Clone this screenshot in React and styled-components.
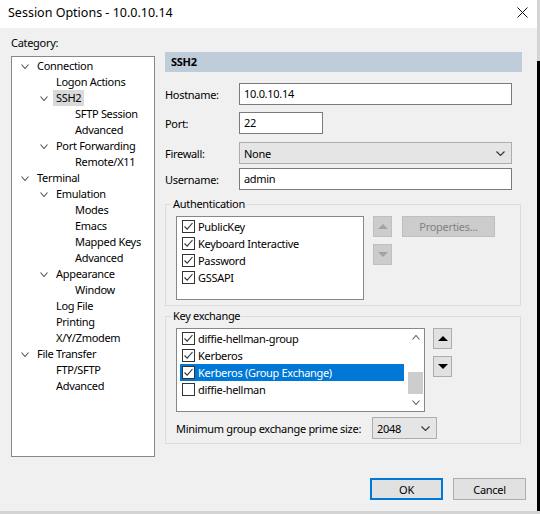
import React from "react";
import styled, { createGlobalStyle } from "styled-components";

const GlobalStyle = createGlobalStyle`
  html, body {
    margin: 0;
    padding: 0;
  }
  body {
    background: linear-gradient(#d4d4d4 0, #d4d4d4 61px, #000 61px);
    font-family: "Noto Sans", "Segoe UI", sans-serif;
    font-size: 11px;
    letter-spacing: -0.3px;
    color: #000;
  }
`;

const Window = styled.div`
  width: 537px;
  height: 511px;
  background: #f0f0f0;
  display: flex;
  flex-direction: column;
  overflow: hidden;
`;

const TitleBar = styled.div`
  height: 28px;
  flex: none;
  background: #fff;
  display: flex;
  justify-content: space-between;
  align-items: flex-start;
`;

const TitleText = styled.div`
  font-size: 12.5px;
  letter-spacing: 0;
  line-height: 16px;
  padding: 5px 0 0 8px;
`;

const CloseBox = styled.div`
  width: 30px;
  height: 24px;
  display: flex;
  align-items: center;
  justify-content: center;
`;

const Body = styled.div`
  padding: 7px 11px 0 11px;
`;

const Main = styled.div`
  display: flex;
  gap: 10px;
`;

const LeftCol = styled.div`
  width: 144px;
  flex: none;
`;

const CategoryLabel = styled.div`
  line-height: 16px;
  margin-bottom: 5px;
`;

const TreeBox = styled.div`
  height: 401px;
  box-sizing: border-box;
  border: 1px solid #828790;
  background: #fff;
  padding-top: 1px;
`;

const TreeRow = styled.div`
  height: 16px;
  display: flex;
  align-items: center;
  padding-left: ${(p) => 4 + p.$level * 19}px;
`;

const ChevronSlot = styled.div`
  width: 18px;
  flex: none;
  display: flex;
  align-items: center;
  justify-content: center;
`;

const TreeLabel = styled.span`
  padding: 0 3px;
  line-height: 16px;
  white-space: nowrap;
  background: ${(p) => (p.$selected ? "#d9d9d9" : "transparent")};
`;

const RightCol = styled.div`
  flex: 1;
  padding-top: 17px;
  margin-right: 4px;
`;

const PageHeader = styled.div`
  height: 20px;
  line-height: 20px;
  background: #bfcddb;
  font-weight: bold;
  padding-left: 6px;
`;

const FieldRow = styled.div`
  display: flex;
  align-items: center;
  margin-top: ${(p) => p.$top}px;
`;

const FieldLabel = styled.div`
  width: 74px;
  flex: none;
`;

const TextBox = styled.div`
  width: ${(p) => p.$width}px;
  height: 22px;
  box-sizing: border-box;
  border: 1px solid #7a7a7a;
  background: #fff;
  padding: 0 4px;
  line-height: 19px;
`;

const Select = styled.div`
  width: ${(p) => p.$width}px;
  height: 22px;
  box-sizing: border-box;
  border: 1px solid #adadad;
  background: #e5e5e5;
  padding: 0 6px 0 4px;
  display: flex;
  align-items: center;
  justify-content: space-between;
`;

const Group = styled.fieldset`
  margin: ${(p) => p.$top}px 1px 0 0;
  padding: 0;
  border: 1px solid #dcdcdc;
  min-width: 0;
`;

const Legend = styled.legend`
  margin-left: 5px;
  padding: 0 2px;
  line-height: 16px;
`;

const GroupBody = styled.div`
  padding: 4px 10px ${(p) => p.$bottom}px 10px;
`;

const ListRow = styled.div`
  display: flex;
  align-items: flex-start;
`;

const ListBox = styled.div`
  width: ${(p) => p.$width}px;
  height: 84px;
  box-sizing: border-box;
  border: 1px solid #828790;
  background: #fff;
  display: flex;
  flex: none;
`;

const Items = styled.div`
  flex: 1;
  padding: 1px 3px 0;
`;

const Item = styled.div`
  height: 17px;
  display: flex;
  align-items: center;
  padding-left: 2px;
  background: ${(p) => (p.$selected ? "#0078d7" : "transparent")};
  color: ${(p) => (p.$selected ? "#fff" : "#000")};
  white-space: nowrap;
`;

const Check = styled.div`
  width: 13px;
  height: 13px;
  box-sizing: border-box;
  border: 1px solid #333;
  background: #fff;
  margin-right: 3px;
  flex: none;
  display: flex;
  align-items: center;
  justify-content: center;
`;

const ScrollBar = styled.div`
  width: 17px;
  display: flex;
  flex-direction: column;
  background: #fff;
`;

const ScrollArrow = styled.div`
  height: 17px;
  display: flex;
  align-items: center;
  justify-content: center;
`;

const ScrollTrack = styled.div`
  flex: 1;
  display: flex;
  flex-direction: column;
  justify-content: flex-end;
`;

const Thumb = styled.div`
  height: 22px;
  margin: 0 1px;
  background: #cdcdcd;
`;

const MoveButtons = styled.div`
  display: flex;
  flex-direction: column;
  gap: 7px;
  margin-left: ${(p) => p.$gap}px;
`;

const ArrowButton = styled.div`
  width: 19px;
  height: 21px;
  box-sizing: border-box;
  border: 1px solid ${(p) => (p.$disabled ? "#bfbfbf" : "#adadad")};
  background: ${(p) => (p.$disabled ? "#cccccc" : "#e1e1e1")};
  display: flex;
  align-items: center;
  justify-content: center;
`;

const PushButton = styled.div`
  width: ${(p) => p.$width}px;
  height: ${(p) => p.$height}px;
  box-sizing: border-box;
  border: ${(p) => (p.$default ? "2px solid #0078d7" : p.$disabled ? "1px solid #bfbfbf" : "1px solid #adadad")};
  background: ${(p) => (p.$disabled ? "#cccccc" : "#e1e1e1")};
  color: ${(p) => (p.$disabled ? "#838383" : "#000")};
  display: flex;
  align-items: center;
  justify-content: center;
  margin-left: ${(p) => p.$gap || 0}px;
  flex: none;
`;

const PrimeRow = styled.div`
  display: flex;
  align-items: center;
  margin-top: 5px;
`;

const PrimeLabel = styled.div`
  width: 196px;
  flex: none;
`;

const Footer = styled.div`
  display: flex;
  justify-content: flex-end;
  gap: 10px;
  margin-top: 21px;
`;

const Chevron = ({ w = 8, h = 5, color = "#555" }) => (
  <svg width={w} height={h} viewBox={`0 0 ${w} ${h}`}>
    <path d={`M0.5 0.5 L${w / 2} ${h - 0.5} L${w - 0.5} 0.5`} fill="none" stroke={color} strokeWidth="1.1" />
  </svg>
);

const ChevronUp = ({ w = 8, h = 5, color = "#606060" }) => (
  <svg width={w} height={h} viewBox={`0 0 ${w} ${h}`}>
    <path d={`M0.5 ${h - 0.5} L${w / 2} 0.5 L${w - 0.5} ${h - 0.5}`} fill="none" stroke={color} strokeWidth="1.1" />
  </svg>
);

const Triangle = ({ up, color }) => (
  <svg width="10" height="5" viewBox="0 0 10 5">
    <polygon points={up ? "0,5 5,0 10,5" : "0,0 10,0 5,5"} fill={color} />
  </svg>
);

const CheckMark = () => (
  <svg width="11" height="11" viewBox="0 0 11 11">
    <path d="M1.5 5.5 L4.2 8.2 L9.5 2" fill="none" stroke="#333" strokeWidth="1.1" />
  </svg>
);

const tree = [
  [0, "Connection", true],
  [1, "Logon Actions"],
  [1, "SSH2", true, true],
  [2, "SFTP Session"],
  [2, "Advanced"],
  [1, "Port Forwarding", true],
  [2, "Remote/X11"],
  [0, "Terminal", true],
  [1, "Emulation", true],
  [2, "Modes"],
  [2, "Emacs"],
  [2, "Mapped Keys"],
  [2, "Advanced"],
  [1, "Appearance", true],
  [2, "Window"],
  [1, "Log File"],
  [1, "Printing"],
  [1, "X/Y/Zmodem"],
  [0, "File Transfer", true],
  [1, "FTP/SFTP"],
  [1, "Advanced"],
];

const authMethods = ["PublicKey", "Keyboard Interactive", "Password", "GSSAPI"];

const kexMethods = [
  { name: "diffie-hellman-group", on: true },
  { name: "Kerberos", on: true },
  { name: "Kerberos (Group Exchange)", on: true, selected: true },
  { name: "diffie-hellman", on: false },
];

export default function App() {
  return (
    <>
      <GlobalStyle />
      <Window>
        <TitleBar>
          <TitleText>Session Options - 10.0.10.14</TitleText>
          <CloseBox>
            <svg width="11" height="11" viewBox="0 0 11 11">
              <path d="M0.5 0.5 L10.5 10.5 M10.5 0.5 L0.5 10.5" stroke="#111" strokeWidth="1" />
            </svg>
          </CloseBox>
        </TitleBar>
        <Body>
          <Main>
            <LeftCol>
              <CategoryLabel>Category:</CategoryLabel>
              <TreeBox>
                {tree.map(([level, label, expanded, selected], i) => (
                  <TreeRow key={i} $level={level}>
                    <ChevronSlot>{expanded && <Chevron />}</ChevronSlot>
                    <TreeLabel $selected={selected}>{label}</TreeLabel>
                  </TreeRow>
                ))}
              </TreeBox>
            </LeftCol>
            <RightCol>
              <PageHeader>SSH2</PageHeader>
              <FieldRow $top={11}>
                <FieldLabel>Hostname:</FieldLabel>
                <TextBox $width={273}>10.0.10.14</TextBox>
              </FieldRow>
              <FieldRow $top={7}>
                <FieldLabel>Port:</FieldLabel>
                <TextBox $width={84}>22</TextBox>
              </FieldRow>
              <FieldRow $top={8}>
                <FieldLabel>Firewall:</FieldLabel>
                <Select $width={273}>
                  <span>None</span>
                  <Chevron w={9} color="#333" />
                </Select>
              </FieldRow>
              <FieldRow $top={4}>
                <FieldLabel>Username:</FieldLabel>
                <TextBox $width={273}>admin</TextBox>
              </FieldRow>

              <Group $top={6}>
                <Legend>Authentication</Legend>
                <GroupBody $bottom={5}>
                  <ListRow>
                    <ListBox $width={188}>
                      <Items>
                        {authMethods.map((m) => (
                          <Item key={m}>
                            <Check>
                              <CheckMark />
                            </Check>
                            {m}
                          </Item>
                        ))}
                      </Items>
                    </ListBox>
                    <MoveButtons $gap={9}>
                      <ArrowButton $disabled>
                        <Triangle up color="#a3a3a3" />
                      </ArrowButton>
                      <ArrowButton $disabled>
                        <Triangle color="#a3a3a3" />
                      </ArrowButton>
                    </MoveButtons>
                    <PushButton $width={93} $height={21} $gap={10} $disabled>
                      Properties...
                    </PushButton>
                  </ListRow>
                </GroupBody>
              </Group>

              <Group $top={2}>
                <Legend>Key exchange</Legend>
                <GroupBody $bottom={4}>
                  <ListRow>
                    <ListBox $width={249}>
                      <Items>
                        {kexMethods.map((m) => (
                          <Item key={m.name} $selected={m.selected}>
                            <Check>{m.on && <CheckMark />}</Check>
                            {m.name}
                          </Item>
                        ))}
                      </Items>
                      <ScrollBar>
                        <ScrollArrow>
                          <ChevronUp />
                        </ScrollArrow>
                        <ScrollTrack>
                          <Thumb />
                        </ScrollTrack>
                        <ScrollArrow>
                          <Chevron color="#606060" />
                        </ScrollArrow>
                      </ScrollBar>
                    </ListBox>
                    <MoveButtons $gap={8}>
                      <ArrowButton>
                        <Triangle up color="#000" />
                      </ArrowButton>
                      <ArrowButton>
                        <Triangle color="#000" />
                      </ArrowButton>
                    </MoveButtons>
                  </ListRow>
                  <PrimeRow>
                    <PrimeLabel>Minimum group exchange prime size:</PrimeLabel>
                    <Select $width={65}>
                      <span>2048</span>
                      <Chevron w={9} color="#333" />
                    </Select>
                  </PrimeRow>
                </GroupBody>
              </Group>
            </RightCol>
          </Main>
          <Footer>
            <PushButton $width={73} $height={22} $default>
              OK
            </PushButton>
            <PushButton $width={73} $height={22}>
              Cancel
            </PushButton>
          </Footer>
        </Body>
      </Window>
    </>
  );
}
